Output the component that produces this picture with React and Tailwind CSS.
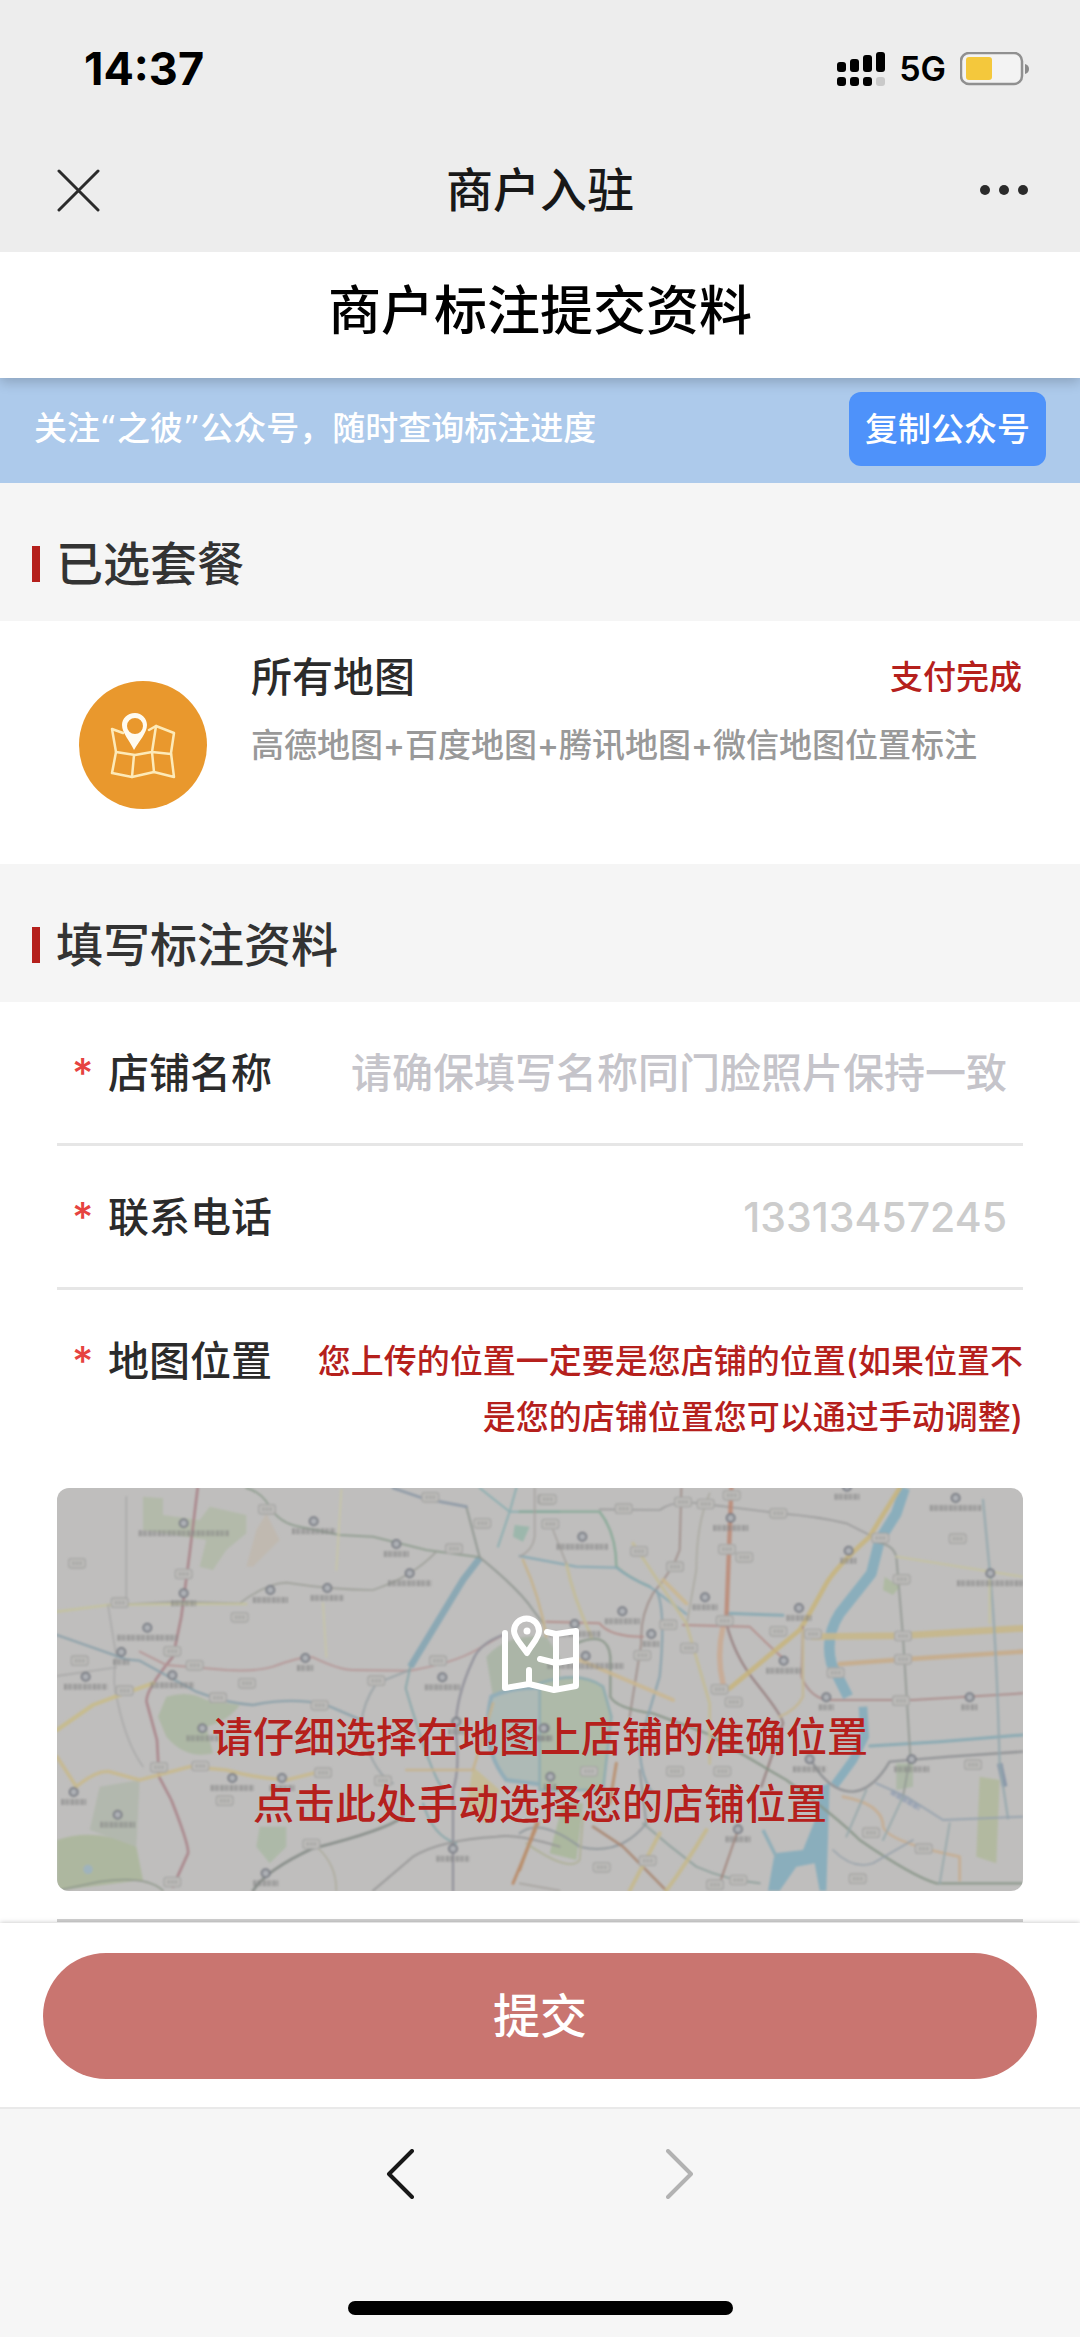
import { useState } from 'react';

const westRoads = [
    { d: 'M474 54 L450 250 L425 440 L400 560 Q310 670 322 700 L352 810 L358 920 L395 990 Q450 1130 445 1150 L400 1250', color: '#a98388', w: 8 },
    { d: 'M620 54 Q665 65 690 110 Q720 160 780 170 L900 195 L1000 200 L1160 240 L1320 262', color: '#8f9c8f', w: 6 },
    { d: 'M205 405 L420 395 L600 400 Q680 340 740 338 Q880 360 1000 360 Q1120 320 1190 245', color: '#9c9f98', w: 5 },
    { d: 'M52 425 L205 405 L420 402 L620 402', color: '#c3c2a0', w: 8 },
    { d: 'M205 405 L230 560 Q215 640 235 700 Q260 820 310 890', color: '#a3a3a3', w: 4 },
    { d: 'M52 618 L230 592 M260 80 L260 400', color: '#a3a3a3', w: 4 },
    { d: 'M52 495 L260 568 L300 572 L360 605 L470 665 Q560 700 640 705 Q760 680 860 705 L960 748', color: '#8aa0a8', w: 7 },
    { d: 'M300 545 L380 585 L560 600 Q650 605 700 590 Q780 560 820 562 Q900 600 940 600 L1110 602 Q1240 580 1310 540 L1390 495', color: '#b59696', w: 6 },
    { d: 'M1110 600 L1010 640 Q970 700 965 760 Q990 900 1060 940', color: '#9aa3a6', w: 6 },
    { d: 'M1112 590 L1098 655 Q1170 900 1205 950 M1150 1000 Q1180 1100 1250 1120', color: '#86a5a8', w: 6 },
    { d: 'M1390 495 Q1320 520 1300 570 Q1240 700 1250 800 Q1260 900 1240 960 L1240 1262', color: '#8f8f99', w: 7 },
    { d: 'M52 780 L160 705 Q250 670 340 640', color: '#c8bb8b', w: 12 },
    { d: 'M52 860 L110 950 Q170 900 210 905 L300 930 L450 890 L560 900 Q650 925 740 930 L860 900', color: '#c8b98f', w: 11 },
    { d: 'M1090 1040 Q1040 1080 820 1135 Q680 1200 640 1262', color: '#838a85', w: 8 },
    { d: 'M1000 1262 L1120 1160 Q1200 1110 1370 1100 Q1430 1090 1560 1130', color: '#969696', w: 6 },
    { d: 'M52 1262 L180 1235 Q320 1215 370 1262', color: '#8f988c', w: 5 },
    { d: 'M1280 110 L1320 262 Q1440 360 1480 420 L1510 460', color: '#8f9690', w: 6 },
    { d: 'M1320 54 L1410 125 L1560 125 M1430 54 L1410 125 L1375 230', color: '#8aaeb0', w: 6 },
    { d: 'M1060 54 L1150 85 L1280 110', color: '#8c98a5', w: 8 },
    { d: 'M905 60 L890 300 M850 400 L860 560 M860 830 Q930 860 1000 850', color: '#c6c5a8', w: 6 },
    { d: 'M1450 270 Q1500 380 1520 500 M1100 900 L1300 900 L1360 700', color: '#c5b38d', w: 8 },
    { d: 'M1495 1060 L1420 1240', color: '#b98a66', w: 9 },
    { d: 'M830 1130 Q890 1180 890 1262', color: '#a9a795', w: 4 },
];

const eastRoads = [
    { d: 'M0 125 L240 125 Q290 190 290 290 Q330 325 390 350', color: '#86a996', w: 7 },
    { d: 'M0 258 L170 290 L290 293 Q330 325 390 350 L500 432', color: '#88a8b2', w: 7 },
    { d: 'M620 430 L790 436 M1050 828 L1260 815 L1508 795', color: '#86a9b3', w: 9 },
    { d: 'M240 118 L420 120 Q460 90 540 100 L780 130 Q900 140 980 160 L1060 200', color: '#999', w: 5 },
    { d: 'M485 54 L480 240 Q460 300 400 370 Q360 440 365 520 L330 740', color: '#a08f8b', w: 6 },
    { d: 'M570 70 Q530 160 530 300 L500 470', color: '#aaa8a0', w: 5 },
    { d: 'M635 54 L620 450', color: '#bd8b78', w: 13 },
    { d: 'M620 460 Q645 560 710 640 Q790 740 790 760 L725 950', color: '#97807f', w: 7 },
    { d: 'M610 470 Q590 560 610 640', color: '#c9ab93', w: 16 },
    { d: 'M80 455 L240 460 Q270 500 370 500 M490 465 L690 470 Q720 500 790 565', color: '#b28c88', w: 6 },
    { d: 'M1140 54 L1080 150 L1050 200 Q950 290 920 340 Q860 450 840 480 L720 580 L630 655', color: '#c6b57f', w: 14 },
    { d: 'M880 500 L1150 497 L1508 475', color: '#c6b78a', w: 20 },
    { d: 'M960 582 L1150 568 L1508 545', color: '#c6ac8b', w: 14 },
    { d: 'M850 470 L845 620 Q870 680 920 690 L1180 690 L1508 670', color: '#ab8b89', w: 6 },
    { d: 'M850 480 L850 680 Q830 720 780 740', color: '#c3b796', w: 8 },
    { d: 'M880 880 Q930 965 1000 965 Q1060 960 1110 875 L1290 860 L1508 845', color: '#8d8f92', w: 7 },
    { d: 'M1390 90 L1410 300 Q1430 500 1440 880 L1465 1045', color: '#96a9ae', w: 7 },
    { d: 'M1060 215 Q1120 220 1130 260 L1150 500 L1172 860 L1150 980', color: '#939a95', w: 6 },
    { d: 'M1410 330 L1410 460 M1130 260 L1508 320', color: '#c4c2a2', w: 7 },
    { d: 'M1070 940 L1160 980 L1270 1050 L1508 1040', color: '#95a1ad', w: 6 },
    { d: 'M170 520 Q265 480 272 560 L272 680 Q290 715 400 730 L560 790 L800 930 Q950 1040 1020 1110 Q1180 1220 1250 1240 L1508 1240', color: '#889688', w: 7 },
    { d: 'M410 360 Q440 420 420 620 L360 820 Q360 920 400 970', color: '#8ba3ad', w: 7 },
    { d: 'M140 280 Q160 380 215 500 M340 220 L500 460 L570 700 L570 880', color: '#c3bd99', w: 9 },
    { d: 'M180 570 L460 690 M430 330 L500 400', color: '#cab792', w: 12 },
    { d: 'M0 1090 Q60 1040 180 1130 Q300 1160 380 1060 L360 900', color: '#8f969a', w: 6 },
    { d: 'M20 1120 Q150 1210 180 1170 L190 1040', color: '#aeb097', w: 6 },
    { d: 'M220 1070 L310 1130 L440 1262', color: '#a98772', w: 8 },
    { d: 'M50 1060 L0 1200 M290 880 L270 1000', color: '#b98f6d', w: 9 },
    { d: 'M370 1060 Q450 1130 530 1190 Q620 1230 720 1240', color: '#8fa09b', w: 6 },
    { d: 'M655 1080 L600 1240', color: '#a1837a', w: 6 },
    { d: 'M560 1080 Q500 1180 440 1262 M420 1090 L330 1262', color: '#c5b98e', w: 12 },
    { d: 'M970 980 Q1080 1000 1090 1060 Q1080 1110 1320 1160 L1320 1230', color: '#c5ae93', w: 9 },
    { d: 'M1290 1060 L1260 1240 M1150 980 L1090 1110 M1040 960 L980 1100', color: '#98a9ab', w: 6 },
    { d: 'M940 1140 Q1000 1200 1060 1180 L1180 1110', color: '#95a0a8', w: 5 },
    { d: 'M0 1240 L120 1262 M100 180 L140 280 M45 54 L45 200 Q40 240 0 260', color: '#a5a29f', w: 5 },
];

// place markers: x, y, label width
const westPlaces = [
    [432, 160, 270], [822, 154, 130], [1070, 222, 75], [1110, 310, 130], [692, 360, 105], [863, 354, 100],
    [432, 370, 75], [323, 473, 180], [245, 546, 50], [138, 620, 130], [398, 616, 130], [797, 564, 50],
    [1208, 622, 105], [488, 775, 95], [578, 924, 130], [727, 924, 75], [102, 966, 75], [234, 1034, 105],
    [1240, 1136, 100], [678, 1210, 75], [1515, 775, 50], [1250, 755, 50],
];
const eastPlaces = [
    [188, 200, 155], [633, 144, 105], [982, 50, 75], [1308, 84, 155], [987, 242, 50], [1412, 310, 200],
    [556, 382, 75], [838, 414, 75], [308, 424, 105], [395, 492, 50], [165, 462, 155], [198, 558, 230],
    [792, 572, 105], [920, 682, 45], [1350, 682, 50], [870, 868, 100], [1176, 868, 105], [655, 1078, 75],
    [92, 920, 40], [72, 775, 40],
];

const westShields = [[682, 118], [1172, 82], [432, 312], [112, 280], [240, 398], [600, 442], [398, 544], [465, 586],
    [120, 572], [622, 640], [255, 662], [535, 683], [840, 706], [1010, 632], [1195, 572], [358, 892], [482, 888],
    [850, 908], [555, 992], [815, 1122], [398, 1236], [1520, 88], [1328, 160], [1030, 932], [1243, 236]];
const eastShields = [[84, 88], [92, 162], [312, 116], [490, 96], [558, 102], [776, 130], [636, 76], [622, 238], [674, 262],
    [358, 244], [466, 290], [615, 452], [776, 484], [880, 492], [446, 464], [508, 534], [368, 556], [600, 658], [642, 696],
    [1082, 204], [1146, 328], [1150, 498], [1150, 568], [948, 608], [1144, 692], [1314, 206], [1360, 884], [208, 904],
    [466, 904], [608, 904], [1054, 1088], [1014, 1226], [246, 1192], [384, 1172], [586, 1244], [656, 1230], [1212, 1136]];

function MapLayer({ roads, places, shields }) {
    return (
        <>
            {roads.map((road) => (
                <path key={road.d} d={road.d} stroke={road.color} strokeWidth={road.w} fill="none" strokeLinecap="round" strokeLinejoin="round" opacity="0.9" />
            ))}
            {shields.map(([x, y]) => (
                <g key={`${x}-${y}`}>
                    <rect x={x - 25} y={y - 14} width="50" height="28" rx="8" fill="#bdbcba" stroke="#a6a6a4" strokeWidth="4" />
                    <path d={`M${x - 15} ${y}h30`} stroke="#aaaaa8" strokeWidth="12" strokeDasharray="8 3" />
                </g>
            ))}
            {places.map(([x, y, width]) => (
                <g key={`${x}-${y}`}>
                    <circle cx={x} cy={y} r="12" fill="#adb0b5" stroke="#7c7f86" strokeWidth="6" />
                    <path d={`M${x - width / 2} ${y + 30}h${width}`} stroke="#868686" strokeWidth="18" strokeDasharray="9 3 6 2 5 4" opacity="0.65" />
                </g>
            ))}
        </>
    );
}

function CityMap() {
    return (
        <svg viewBox="0 0 2898 1209" preserveAspectRatio="xMidYMid slice" className="absolute inset-0 w-full h-full" aria-hidden="true">
            <defs>
                <filter id="soft" x="0" y="0" width="100%" height="100%">
                    <feGaussianBlur stdDeviation="3" />
                </filter>
            </defs>
            <rect width="2898" height="1209" fill="#bfbebd" />
            <g filter="url(#soft)">
                <g transform="translate(-52 -54)">
                    <path d="M310 80 L370 85 L370 135 L480 150 L510 110 L620 135 L620 190 L560 240 L520 300 L480 290 L500 210 L310 180Z" fill="#b3baaa" />
                    <path d="M380 680 Q450 660 500 690 L600 705 Q570 750 500 770 L520 850 Q440 870 380 800 L355 740Z" fill="#adb8a5" />
                    <path d="M52 1110 Q170 1070 290 1130 L310 1230 L52 1262Z" fill="#adb79f" />
                    <path d="M180 950 L300 930 L290 1130 L150 1080Z" fill="#b2b8ae" />
                    <path d="M660 1070 L740 1070 L740 1130 L690 1180 L650 1130Z" fill="#adb9a8" />
                    <path d="M680 130 L720 210 L640 290 L620 290 L650 180Z" fill="#c0b9b0" />
                    <path d="M1340 560 Q1400 490 1520 500 L1560 560 L1560 680 L1360 680Z" fill="#abb5a7" />
                    <path d="M1355 680 Q1440 640 1560 660 L1560 950 L1400 930 Q1320 830 1355 680Z" fill="#aebab6" stroke="#92adb8" strokeWidth="12" />
                    <path d="M1300 890 L1380 960 L1340 1060 L1280 1010Z" fill="#c4bb98" />
                    <path d="M1320 265 L1270 330 L1112 590" stroke="#8ba8b4" strokeWidth="20" fill="none" />
                    <path d="M1425 165 L1470 170 L1450 215 L1420 200Z" fill="#9cb7ac" />
                    <circle cx="145" cy="1198" r="14" fill="#9fb3bd" />
                </g>
                <g transform="translate(1388 -54)">
                    <path d="M60 640 Q180 600 250 650 L275 740 L250 960 L60 960Z" fill="#aebaa9" stroke="#92adb0" strokeWidth="8" />
                    <path d="M130 1000 L190 1000 L170 1170 L90 1150Z" fill="#acb89f" />
                    <path d="M1380 920 L1440 930 L1430 1180 L1370 1160Z" fill="#b2b9a0" />
                    <path d="M1130 880 L1180 880 L1180 950 L1130 960Z" fill="#adb8a7" />
                    <path d="M1095 320 L1140 350 L1120 375 L1090 360Z" fill="#afbaa3" />
                    <path d="M1155 54 L1130 130 L1080 210 L1055 310 L960 430 Q915 500 935 580 L985 680" stroke="#8aaebc" strokeWidth="32" fill="none" strokeLinejoin="round" />
                    <path d="M1030 710 L1035 800 L1000 870 L945 945" stroke="#8aaebc" strokeWidth="26" fill="none" />
                    <path d="M930 940 L925 1100 L920 1262 L900 1262 L885 1180 L830 1190 L780 1262 L745 1262 L765 1150 L850 1140 L890 1040 L900 950Z" fill="#8aaebc" />
                    <path d="M730 1080 L770 1160" stroke="#90aeb8" strokeWidth="10" />
                    <path d="M1440 880 L1455 950" stroke="#8795a8" strokeWidth="16" />
                    <path d="M1115 965 L1200 1015" stroke="#9ca5b5" strokeWidth="16" strokeDasharray="16 3" />
                </g>
                <g transform="translate(-52 -54)">
                    <MapLayer roads={westRoads} places={westPlaces} shields={westShields} />
                </g>
                <g transform="translate(1388 -54)">
                    <MapLayer roads={eastRoads} places={eastPlaces} shields={eastShields} />
                </g>
            </g>
        </svg>
    );
}

function SectionTitle({ children }) {
    return (
        <div className="flex items-center gap-4 h-[138px] px-8 pt-6">
            <span className="w-2 h-9 bg-[#b5201c]"></span>
            <h2 className="text-[47px] leading-[60px] font-medium text-[#333]">{children}</h2>
        </div>
    );
}

function FieldLabel({ htmlFor, children }) {
    return (
        <label htmlFor={htmlFor} className="flex items-center gap-4 shrink-0 text-[41px] leading-[56px] font-medium text-[#2b2b2b]">
            <span className="w-5 text-center text-[#e64340]">*</span>
            {children}
        </label>
    );
}

function App() {
    const [shopName, setShopName] = useState('');
    const phone = '13313457245';

    return (
        <div className="min-h-screen flex flex-col bg-[#f5f5f5] font-[Inter,'Noto_Sans_CJK_SC',sans-serif]">
            {/* Phone status + webview bar */}
            <header className="relative z-20 bg-[#ededed]">
                <div className="flex items-center justify-between h-[137px] pl-[84px] pr-[50px]">
                    <span className="text-[45px] leading-[56px] font-bold text-black">14:37</span>
                    <div className="flex items-center gap-[14px]">
                        <svg width="48" height="34" viewBox="0 0 48 34" aria-hidden="true">
                            <rect x="0" y="10" width="9" height="10" rx="3" />
                            <rect x="13" y="7" width="9" height="13" rx="3" />
                            <rect x="26" y="3" width="9" height="17" rx="3" />
                            <rect x="39" y="0" width="9" height="20" rx="3" />
                            <rect x="0" y="25" width="9" height="9" rx="3" />
                            <rect x="13" y="25" width="9" height="9" rx="3" />
                            <rect x="26" y="25" width="9" height="9" rx="3" />
                            <rect x="39" y="25" width="9" height="9" rx="3" fill="#c9c9c9" />
                        </svg>
                        <span className="text-[34px] leading-[40px] font-semibold text-black">5G</span>
                        <svg width="70" height="34" viewBox="0 0 70 34" aria-hidden="true">
                            <rect x="1" y="1" width="61" height="31" rx="8" fill="#f3f3f3" stroke="#909090" strokeWidth="2.5" />
                            <rect x="6" y="5" width="26" height="23" rx="3" fill="#f4c83c" />
                            <path d="M65 12 Q69 13 69 17 Q69 21 65 22Z" fill="#8a8a8a" />
                        </svg>
                    </div>
                </div>
                <div className="flex items-start justify-between h-[115px] pl-[57px] pr-[52px]">
                    <button type="button" aria-label="关闭" className="w-12 h-[106px] flex items-center">
                        <svg width="43" height="43" viewBox="0 0 43 43" stroke="#2b2b2b" strokeWidth="3" strokeLinecap="round">
                            <path d="M2 2 L41 41 M41 2 L2 41" />
                        </svg>
                    </button>
                    <h1 className="h-[106px] flex items-center text-[47px] leading-[60px] font-medium text-[#181818]">商户入驻</h1>
                    <button type="button" aria-label="更多" className="w-[53px] h-[106px] flex items-center justify-end">
                        <svg width="48" height="10" viewBox="0 0 48 10" fill="#2b2b2b">
                            <circle cx="5" cy="5" r="5" />
                            <circle cx="24" cy="5" r="5" />
                            <circle cx="43" cy="5" r="5" />
                        </svg>
                    </button>
                </div>
            </header>

            <div className="relative z-10 h-[126px] pb-2 flex items-center justify-center bg-white shadow-[0_4px_12px_rgba(0,0,0,0.2)]">
                <h2 className="text-[53px] leading-[64px] font-medium text-black">商户标注提交资料</h2>
            </div>

            <div className="flex items-center justify-between h-[105px] pl-[34px] pr-[34px] pb-1 bg-[#adcaeb]">
                <p className="text-[33px] leading-[48px] font-medium text-white font-['DejaVu_Sans','Noto_Sans_CJK_SC',sans-serif]">
                    关注“之彼”公众号，随时查询标注进度
                </p>
                <button type="button" className="px-4 h-[74px] rounded-xl bg-[#4e92fa] text-[33px] leading-[48px] font-medium text-white">
                    复制公众号
                </button>
            </div>

            {/* Selected package */}
            <SectionTitle>已选套餐</SectionTitle>
            <section className="flex gap-11 h-[243px] pl-[79px] pr-[58px] pt-7 bg-white">
                <svg width="128" height="128" viewBox="0 0 128 128" className="mt-8 shrink-0" aria-hidden="true">
                    <circle cx="64" cy="64" r="64" fill="#e9982d" />
                    <g fill="none" stroke="#fdeab8" strokeWidth="2.5" strokeLinejoin="round" strokeLinecap="round">
                        <path d="M44 52 L33 48 L37 71 L33 92 L53 96 L75 91 L95 96 L92 72 L95 52 L77 45 L70 49" />
                        <path d="M37 71 L56 74 L73 71 L92 73 M55 74 L53 96 M77 45 L73 71 L75 91" />
                    </g>
                    <path d="M56 32 C48 32 43 38 43 44 C43 52 51 60 55 69 C60 60 68 52 68 44 C68 38 63 32 56 32Z M56 37 A8 8 0 1 1 56 53 A8 8 0 1 1 56 37Z" fill="#fffbf0" fillRule="evenodd" />
                </svg>
                <div className="flex-1">
                    <div className="flex items-center justify-between">
                        <h3 className="text-[41px] leading-[56px] font-medium text-[#2b2b2b]">所有地图</h3>
                        <span className="text-[33px] leading-[48px] font-medium text-[#b5201c]">支付完成</span>
                    </div>
                    <p className="mt-4 text-[33px] leading-[48px] font-medium text-[#999]">高德地图+百度地图+腾讯地图+微信地图位置标注</p>
                </div>
            </section>

            {/* Form */}
            <SectionTitle>填写标注资料</SectionTitle>
            <main className="flex-1 px-[57px] bg-white">
                <div className="flex items-center h-[144px] pl-[15px] pr-4 border-b-3 border-[#e6e6e6]">
                    <FieldLabel htmlFor="shop-name">店铺名称</FieldLabel>
                    <input
                        id="shop-name"
                        type="text"
                        value={shopName}
                        onChange={(e) => setShopName(e.target.value)}
                        placeholder="请确保填写名称同门脸照片保持一致"
                        className="flex-1 min-w-0 text-right text-[41px] leading-[56px] font-medium text-[#2b2b2b] placeholder:text-[#c5c4ca] outline-none"
                    />
                </div>
                <div className="flex items-center h-[144px] pl-[15px] pr-4 border-b-3 border-[#e6e6e6]">
                    <FieldLabel htmlFor="phone">联系电话</FieldLabel>
                    <input
                        id="phone"
                        type="tel"
                        value={phone}
                        readOnly
                        className="flex-1 min-w-0 text-right text-[41px] leading-[56px] font-medium text-[#ccc] outline-none"
                    />
                </div>
                <div className="flex items-start justify-between pl-[15px] pt-[43px] pb-[43px]">
                    <FieldLabel htmlFor="pick-location">地图位置</FieldLabel>
                    <p className="w-[716px] text-right text-[33px] leading-[56px] font-medium text-[#b5201c]">
                        您上传的位置一定要是您店铺的位置(如果位置不是您的店铺位置您可以通过手动调整)
                    </p>
                </div>
                <button id="pick-location" type="button" className="relative block w-full h-[403px] rounded-xl overflow-hidden">
                    <CityMap />
                    <span className="relative flex flex-col items-center h-full pt-32">
                        <svg width="80" height="80" viewBox="0 0 80 80" fill="none" stroke="#fff" strokeWidth="6" strokeLinecap="round" strokeLinejoin="round" className="shrink-0 overflow-visible" aria-hidden="true">
                            <path d="M5 17 V72 L29 68 L54 74 L76 70 V15 L56 18 L47 16" />
                            <path d="M56 18 V73 M40 43 L56 47 L74 44 M29 54 V68" />
                            <path d="M27 37 C22 29 14 22 14 15 A12.500 12.500 0 0 1 39 15 C39 22 31 29 27 37Z" />
                            <circle cx="27" cy="15" r="3.500" fill="#fff" stroke="none" />
                        </svg>
                        <span className="mt-2 text-[41px] leading-[67px] font-medium text-[#b5201c]">
                            请仔细选择在地图上店铺的准确位置
                            <br />
                            点击此处手动选择您的店铺位置
                        </span>
                    </span>
                </button>
                <div className="mt-7 border-b-3 border-[#d0d0d0]"></div>
            </main>

            <div className="relative h-[184px] px-[43px] pt-[30px] bg-white shadow-[0_0_5px_rgba(0,0,0,0.25)]">
                <button type="submit" className="w-full h-[126px] rounded-full bg-[#c97570] text-[47px] leading-[60px] font-medium text-white">
                    提交
                </button>
            </div>

            {/* Browser navigation */}
            <footer className="relative flex flex-col items-center justify-between h-[230px] pt-10 pb-[22px] bg-[#f6f6f6] border-t-2 border-[#e9e9e9]">
                <nav className="flex justify-center gap-[252px]">
                    <button type="button" aria-label="后退">
                        <svg width="28" height="50" viewBox="0 0 28 50" fill="none" stroke="#181818" strokeWidth="4" strokeLinecap="round" strokeLinejoin="round">
                            <path d="M26 2 L3 25 L26 48" />
                        </svg>
                    </button>
                    <button type="button" aria-label="前进" disabled>
                        <svg width="28" height="50" viewBox="0 0 28 50" fill="none" stroke="#b2b2b2" strokeWidth="4" strokeLinecap="round" strokeLinejoin="round">
                            <path d="M2 2 L25 25 L2 48" />
                        </svg>
                    </button>
                </nav>
                <div className="w-[385px] h-[14px] rounded-full bg-black"></div>
            </footer>
        </div>
    );
}

export default App;
